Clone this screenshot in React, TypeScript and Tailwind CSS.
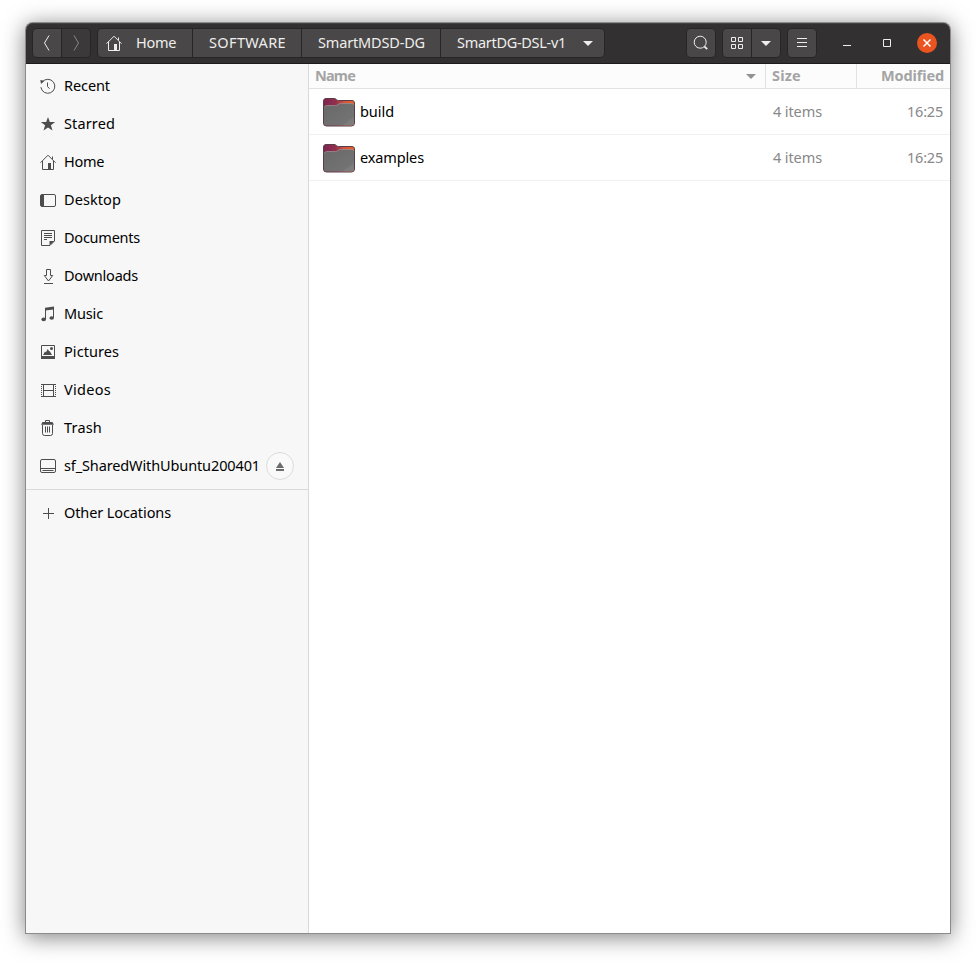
import { useLayoutEffect, useRef } from "react";
import type { ReactNode } from "react";

// Text run whose letter spacing is adjusted so that it takes up `w` pixels.
function Label({ w, children, className = "" }: { w: number; children: string; className?: string }) {
  const ref = useRef<HTMLSpanElement>(null);
  useLayoutEffect(() => {
    const el = ref.current;
    if (!el) return;
    el.style.letterSpacing = "0px";
    const natural = el.getBoundingClientRect().width;
    el.style.letterSpacing = `${(w - natural) / children.length}px`;
  }, [w, children]);
  return (
    <span ref={ref} className={`-mt-0.5 inline-block shrink-0 whitespace-nowrap leading-5 ${className}`}>
      {children}
    </span>
  );
}

function Icon({ children }: { children: ReactNode }) {
  return (
    <svg width="16" height="16" viewBox="0 0 16 16" fill="none" stroke="currentColor" className="shrink-0">
      {children}
    </svg>
  );
}

const HomeGlyph = () => (
  <Icon>
    <path d="M.5 8.7 8 1.2l7.500 7.500M2.500 7v8.500h11V7M12.500 5V2.500" />
    <path d="M8 9h3v6H8z" fill="currentColor" stroke="none" />
  </Icon>
);

const RecentGlyph = () => (
  <Icon>
    <path d="M2.300 4A7 7 0 1 1 .900 9.200M7.500 4.500v4l2 2.200" />
    <path d="M.3 2 4.500 2.700 1 6z" fill="currentColor" stroke="none" />
  </Icon>
);

const StarGlyph = () => (
  <Icon>
    <path d="m8 1 1.800 5 5.400.1-4.300 3.200 1.600 5.200L8 11.400l-4.500 3.100 1.600-5.200L.8 6.100 6.200 6z" fill="currentColor" stroke="none" />
  </Icon>
);

const DesktopGlyph = () => (
  <Icon>
    <rect x=".5" y="2.500" width="15" height="12" rx="1.500" />
    <path d="M1 3h3v11H1z" fill="currentColor" stroke="none" />
  </Icon>
);

const DocumentGlyph = () => (
  <Icon>
    <path d="M1.500.5h13v10.500l-4.500 4.500H1.500zM4 3.500h8M4 5.500h8M4 7.500h8M4 9.500h3" />
    <path d="M9.500 15.500V11h5z" fill="currentColor" stroke="none" />
  </Icon>
);

const DownloadGlyph = () => (
  <Icon>
    <path d="M6.500 1.500h4v6h2.200L8.500 13 4.300 7.500h2.200zM4 15.500h9" />
  </Icon>
);

const MusicGlyph = () => (
  <Icon>
    <path d="M5.500 13V2.500M13.500 11.500V1" />
    <path d="M5 1.700 14 .5v3L5 4.500z" fill="currentColor" stroke="none" />
    <ellipse cx="3.700" cy="13.400" rx="2.300" ry="1.800" fill="currentColor" stroke="none" />
    <ellipse cx="11.700" cy="12" rx="2.300" ry="1.800" fill="currentColor" stroke="none" />
  </Icon>
);

const PictureGlyph = () => (
  <Icon>
    <path d="M1.500 1.500h13v13h-13z" />
    <path d="M1 12h14v3H1zM3 11l2-3.500 1 .8L7.700 5 9 7l1 .5L12 11z" fill="currentColor" stroke="none" />
    <circle cx="11.500" cy="4.500" r="1.500" fill="currentColor" stroke="none" />
  </Icon>
);

const VideoGlyph = () => (
  <Icon>
    <path d="M1 2.500h15M1 14.500h15M3.500 2v13M13.500 2v13M3.500 8.500h10" />
    <path d="M1.500 2v13M15.500 2v13" strokeDasharray="1 1" />
  </Icon>
);

const TrashGlyph = () => (
  <Icon>
    <path d="M5.500 2.500v-2h4v2M2.500 5v8.500q0 2 2 2h6q2 0 2-2V5M5.500 6.500v6M7.500 6.500v6M9.500 6.500v6" />
    <path d="M2.500 2h10L14 4.700H1z" fill="currentColor" stroke="none" />
  </Icon>
);

const DriveGlyph = () => (
  <Icon>
    <rect x=".5" y="1.500" width="15" height="13" rx="1.500" />
    <path d="M1 10.500h14M2.500 12.500h11" />
  </Icon>
);

const PlusGlyph = () => (
  <Icon>
    <path d="M3 8.500h11M8.500 3v11" />
  </Icon>
);

const places: { name: string; w: number; icon: ReactNode }[] = [
  { name: "Recent", w: 46, icon: <RecentGlyph /> },
  { name: "Starred", w: 51, icon: <StarGlyph /> },
  { name: "Home", w: 40, icon: <HomeGlyph /> },
  { name: "Desktop", w: 57, icon: <DesktopGlyph /> },
  { name: "Documents", w: 76, icon: <DocumentGlyph /> },
  { name: "Downloads", w: 74, icon: <DownloadGlyph /> },
  { name: "Music", w: 39, icon: <MusicGlyph /> },
  { name: "Pictures", w: 55, icon: <PictureGlyph /> },
  { name: "Videos", w: 47, icon: <VideoGlyph /> },
  { name: "Trash", w: 38, icon: <TrashGlyph /> },
  { name: "sf_SharedWithUbuntu200401", w: 196, icon: <DriveGlyph /> },
];

function Caret({ className }: { className: string }) {
  return (
    <svg width="10" height="5" viewBox="0 0 10 5" className={className}>
      <path d="M0 0h10L5 5z" fill="currentColor" />
    </svg>
  );
}

function Group({ children, className = "" }: { children: ReactNode; className?: string }) {
  return (
    <div
      className={`flex h-[30px] shrink-0 gap-px overflow-hidden rounded-[5px] border border-[#272525] bg-[#272525] ${className}`}
    >
      {children}
    </div>
  );
}

function Cell({ children, className }: { children: ReactNode; className: string }) {
  return <div className={`flex items-center ${className}`}>{children}</div>;
}

function FolderIcon({ id }: { id: string }) {
  return (
    <svg width="34" height="32" viewBox="0 0 34 32" className="shrink-0">
      <defs>
        <linearGradient id={`${id}-back`} x1="0" x2="1" y1="0" y2="0">
          <stop offset="0" stopColor="#7c2450" />
          <stop offset=".4" stopColor="#93304e" />
          <stop offset=".65" stopColor="#cf5340" />
          <stop offset="1" stopColor="#ee6426" />
        </linearGradient>
        <linearGradient id={`${id}-front`} x1="0" x2="1" y1="0" y2="1">
          <stop offset="0" stopColor="#686868" />
          <stop offset=".8" stopColor="#737373" />
          <stop offset=".81" stopColor="#7b7b7b" />
          <stop offset="1" stopColor="#808080" />
        </linearGradient>
      </defs>
      <path
        d="M1.500 5Q1.500 2.500 4 2.500h8q1.500 0 2.300 1t2.200 1H30q2.500 0 2.500 2.500v20q0 3-3 3h-25q-3 0-3-3z"
        fill={`url(#${id}-back)`}
        stroke="#5a3d46"
      />
      <path
        d="M2 12q0-2.500 2.500-2.500h9q1.500 0 2.500-1t2.500-1H30q2 0 2 2V27q0 2.500-2.500 2.500h-25Q2 29.500 2 27z"
        fill={`url(#${id}-front)`}
      />
      <path d="M2.500 11.500q.3-2 2-2h9q1.500 0 2.500-1t2.500-1H30q1.500 0 2 1.500" fill="none" stroke="#9b8b8b" strokeWidth=".8" />
    </svg>
  );
}

const files = [
  { name: "build", w: 34 },
  { name: "examples", w: 64 },
];

function TitleBar() {
  return (
    <header className="flex h-[41px] shrink-0 items-center rounded-t-[7px] border-b border-[#1d1b1b] bg-[#333031] pl-[6px] text-[#eeeeec] shadow-[inset_0_1px_0_#444142]">
      <Group>
        <Cell className="w-7 justify-center bg-[#494747]">
          <svg width="8" height="16" viewBox="0 0 8 16" fill="none" stroke="currentColor">
            <path d="M6 .5 1.500 8 6 15.500" />
          </svg>
        </Cell>
        <Cell className="w-7 justify-center bg-[#3b3939] text-[#8a8888]">
          <svg width="8" height="16" viewBox="0 0 8 16" fill="none" stroke="currentColor">
            <path d="M2 .5 6.500 8 2 15.500" />
          </svg>
        </Cell>
      </Group>
      <Group className="ml-[6px]">
        <Cell className="w-[94px] gap-[14px] bg-[#494747] pl-2">
          <HomeGlyph />
          <Label w={40}>Home</Label>
        </Cell>
        <Cell className="w-[108px] bg-[#494747] pl-4">
          <Label w={77}>SOFTWARE</Label>
        </Cell>
        <Cell className="w-[138px] bg-[#494747] pl-4">
          <Label w={107}>SmartMDSD-DG</Label>
        </Cell>
        <Cell className="w-[163px] bg-[#494747] pl-4">
          <Label w={109}>SmartDG-DSL-v1</Label>
          <Caret className="ml-[17px]" />
        </Cell>
      </Group>
      <Group className="ml-[81px]">
        <Cell className="w-7 justify-center bg-[#494747]">
          <Icon>
            <circle cx="7.200" cy="7.200" r="6" />
            <path d="m11.300 11.300 2.900 2.900" strokeWidth="1.800" />
          </Icon>
        </Cell>
      </Group>
      <Group className="ml-[6px]">
        <Cell className="w-7 justify-center bg-[#494747]">
          <Icon>
            <path d="M2.500 2.500h4v4h-4zM9.500 2.500h4v4h-4zM2.500 9.500h4v4h-4zM9.500 9.500h4v4h-4z" />
          </Icon>
        </Cell>
        <Cell className="w-7 justify-center bg-[#494747]">
          <Caret className="" />
        </Cell>
      </Group>
      <Group className="ml-[6px]">
        <Cell className="w-7 justify-center bg-[#494747]">
          <Icon>
            <path d="M3 3.500h10M3 7.500h10M3 11.500h10" />
          </Icon>
        </Cell>
      </Group>
      <div className="ml-[22px] flex items-center gap-6">
        <Icon>
          <path d="M4 10.500h8" />
        </Icon>
        <Icon>
          <path d="M4.500 4.500h7v7h-7z" />
        </Icon>
        <div className="-ml-0.5 flex size-5 items-center justify-center rounded-full bg-[#e95420] text-white">
          <Icon>
            <path d="m4.500 4.500 7 7M11.500 4.500l-7 7" strokeWidth="1.500" />
          </Icon>
        </div>
      </div>
    </header>
  );
}

function Sidebar() {
  return (
    <nav className="w-[283px] shrink-0 border-r border-[#d9d9d9] bg-[#f7f7f7] pt-[3px] text-black">
      {places.map((p) => (
        <div key={p.name} className="flex h-[38px] items-center pl-[14px]">
          <span className="text-[#4d4d4d]">{p.icon}</span>
          <Label w={p.w} className="ml-2">{p.name}</Label>
          {p.name.startsWith("sf_") && (
            <span className="ml-1.5 flex size-7 items-center justify-center rounded-full border border-[#dcdcdc] bg-[#f9f9f9] text-[#6b6b6b]">
              <svg width="8" height="9" viewBox="0 0 8 9" fill="currentColor">
                <path d="M4 0 8 6H0zM0 7h8v2H0z" />
              </svg>
            </span>
          )}
        </div>
      ))}
      <div className="mt-1 h-px bg-[#dadada]" />
      <div className="mt-1 flex h-[38px] items-center pl-[14px]">
        <span className="text-[#4d4d4d]"><PlusGlyph /></span>
        <Label w={107} className="ml-2">Other Locations</Label>
      </div>
    </nav>
  );
}

export default function App() {
  return (
    <div className="h-[962px] w-[976px] overflow-hidden bg-white pl-[26px] pt-[23px] font-['Noto_Sans','Open_Sans',sans-serif] text-[14.500px]">
      <div className="flex h-[910px] w-[924px] flex-col rounded-t-[7px] bg-white shadow-[0_0_0_1px_#8b8b8b,0_3px_22px_1px_rgba(0,0,0,0.5)]">
        <TitleBar />
        <div className="flex min-h-0 flex-1">
          <Sidebar />
          <main className="flex-1 bg-white">
            <div className="flex h-[25px] border-b border-[#e2e2e2] bg-[#fcfcfc] font-bold text-[#a4a4a4]">
              <div className="flex w-[457px] items-center justify-between border-r border-[#e2e2e2] pl-[6px] pr-[9px]">
                <Label w={40}>Name</Label>
                <Caret className="text-[#929292]" />
              </div>
              <div className="flex w-[91px] items-center border-r border-[#e2e2e2] pl-[6px]">
                <Label w={29}>Size</Label>
              </div>
              <div className="flex flex-1 items-center justify-end pr-[6px]">
                <Label w={63}>Modified</Label>
              </div>
            </div>
            {files.map((f) => (
              <div key={f.name} className="flex h-[46px] items-center border-b border-[#f1f1f1] text-[#888888]">
                <div className="flex w-[464px] items-center pl-[13px]">
                  <FolderIcon id={f.name} />
                  <Label w={f.w} className="ml-1 text-black">{f.name}</Label>
                </div>
                <Label w={49}>4 items</Label>
                <Label w={36} className="ml-auto mr-[7px]">16:25</Label>
              </div>
            ))}
          </main>
        </div>
      </div>
    </div>
  );
}
